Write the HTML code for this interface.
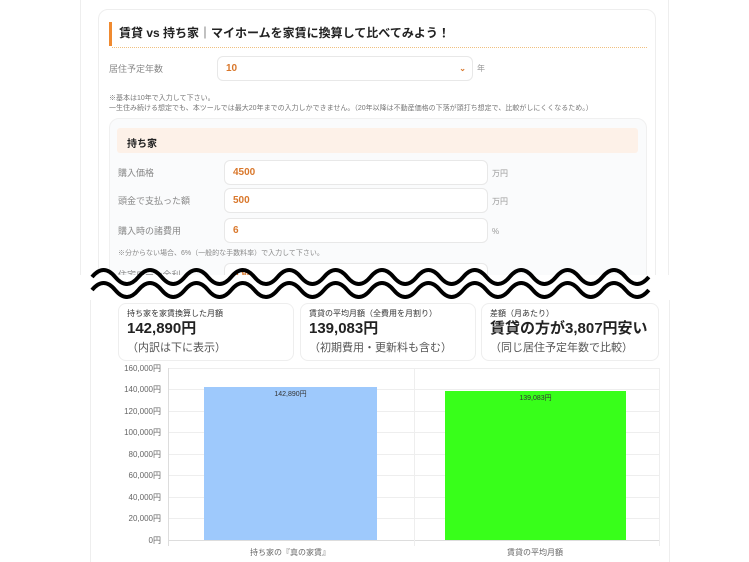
<!DOCTYPE html><html><head><meta charset="utf-8"><style>
*{margin:0;padding:0;box-sizing:border-box}
body{width:749px;height:562px;background:#fff;position:relative;overflow:hidden;font-family:"Liberation Sans","Noto Sans CJK JP",sans-serif;color:#333}
.a{position:absolute}
.lbl{font-size:9px;color:#888;line-height:10px}
.inp{position:absolute;background:#fff;border:1px solid #e8e8e8;border-radius:6px;color:#d9772b;font-size:10px;font-weight:bold;padding-left:8px;display:flex;align-items:center}
.unit{font-size:8px;color:#999;line-height:10px}
.card{position:absolute;border:1px solid #eee;border-radius:8px;background:#fff;top:303px;height:58px;padding:4px 8px}
.card .t{font-size:8px;color:#333}
.card .v{font-size:15px;font-weight:bold;color:#222;line-height:20px}
.card .s{font-size:11px;color:#555}
.yl{position:absolute;right:588px;font-size:8px;color:#666;text-align:right}
.gl{position:absolute;left:168px;width:491px;height:1px;background:#eee}
</style></head><body>
<div class="a" style="left:80px;top:0;width:1px;height:275px;background:#eee"></div>
<div class="a" style="left:668px;top:0;width:1px;height:275px;background:#eee"></div>
<div class="a" style="left:98px;top:9px;width:558px;height:290px;border:1px solid #eee;border-radius:10px;overflow:hidden">
 <div class="a" style="left:10px;top:12px;width:3px;height:24px;background:#f08a30"></div>
 <div class="a" style="left:20px;top:14px;font-size:12px;font-weight:bold;color:#222">賃貸 vs 持ち家｜マイホームを家賃に換算して比べてみよう！</div>
 <div class="a" style="left:13px;top:37px;width:535px;border-top:1px dotted #f0c080"></div>
 <div class="a lbl" style="left:10px;top:54px">居住予定年数</div>
 <div class="inp" style="left:118px;top:46px;width:256px;height:25px">10<span style="position:absolute;right:6px;font-size:8px">⌄</span></div>
 <div class="a unit" style="left:378px;top:54px">年</div>
 <div class="a" style="left:10px;top:84px;font-size:7px;color:#777;line-height:10px">※基本は10年で入力して下さい。<br>一生住み続ける想定でも、本ツールでは最大20年までの入力しかできません。（20年以降は不動産価格の下落が頭打ち想定で、比較がしにくくなるため。）</div>
 <div class="a" style="left:10px;top:108px;width:538px;height:200px;background:#fafbfc;border:1px solid #f0f0f0;border-radius:10px">
  <div class="a" style="left:7px;top:9px;width:521px;height:25px;background:#fdf1e8;border-radius:3px;font-size:10px;font-weight:bold;color:#222;padding:7px 10px">持ち家</div>
  <div class="a lbl" style="left:8px;top:49px">購入価格</div>
  <div class="inp" style="left:114px;top:41px;width:264px;height:25px">4500</div>
  <div class="a unit" style="left:382px;top:50px">万円</div>
  <div class="a lbl" style="left:8px;top:77px">頭金で支払った額</div>
  <div class="inp" style="left:114px;top:69px;width:264px;height:25px">500</div>
  <div class="a unit" style="left:382px;top:78px">万円</div>
  <div class="a lbl" style="left:8px;top:107px">購入時の諸費用</div>
  <div class="inp" style="left:114px;top:99px;width:264px;height:25px">6</div>
  <div class="a unit" style="left:382px;top:108px">%</div>
  <div class="a" style="left:8px;top:129px;font-size:7px;color:#888">※分からない場合、6%（一般的な手数料率）で入力して下さい。</div>
  <div class="a lbl" style="left:8px;top:151px">住宅ローン金利</div>
  <div class="inp" style="left:114px;top:144px;width:264px;height:25px">0.80</div>
 </div>
</div>
<div class="a" style="left:0;top:275px;width:749px;height:287px;background:#fff"></div>
<svg class="a" style="left:0;top:262px" width="749" height="45">
<path fill="none" stroke="#000" stroke-width="4" d="M92 15 q11.6 -14 23.2 0 t23.2 0 t23.2 0 t23.2 0 t23.2 0 t23.2 0 t23.2 0 t23.2 0 t23.2 0 t23.2 0 t23.2 0 t23.2 0 t23.2 0 t23.2 0 t23.2 0 t23.2 0 t23.2 0 t23.2 0 t23.2 0 t23.2 0 t23.2 0 t23.2 0 t23.2 0 t23.2 0"/>
<path fill="none" stroke="#000" stroke-width="4" d="M92 28 q11.6 -14 23.2 0 t23.2 0 t23.2 0 t23.2 0 t23.2 0 t23.2 0 t23.2 0 t23.2 0 t23.2 0 t23.2 0 t23.2 0 t23.2 0 t23.2 0 t23.2 0 t23.2 0 t23.2 0 t23.2 0 t23.2 0 t23.2 0 t23.2 0 t23.2 0 t23.2 0 t23.2 0 t23.2 0"/>
</svg>
<div class="a" style="left:90px;top:300px;width:1px;height:262px;background:#eee"></div>
<div class="a" style="left:669px;top:300px;width:1px;height:262px;background:#eee"></div>
<div class="card" style="left:118px;width:176px"><div class="t">持ち家を家賃換算した月額</div><div class="v">142,890円</div><div class="s">（内訳は下に表示）</div></div>
<div class="card" style="left:300px;width:176px"><div class="t">賃貸の平均月額（全費用を月割り）</div><div class="v">139,083円</div><div class="s">（初期費用・更新料も含む）</div></div>
<div class="card" style="left:481px;width:178px"><div class="t">差額（月あたり）</div><div class="v">賃貸の方が3,807円安い</div><div class="s">（同じ居住予定年数で比較）</div></div>
<div class="gl" style="top:368px"></div><div class="gl" style="top:389px"></div><div class="gl" style="top:411px"></div><div class="gl" style="top:432px"></div><div class="gl" style="top:454px"></div><div class="gl" style="top:475px"></div><div class="gl" style="top:497px"></div><div class="gl" style="top:518px"></div><div class="gl" style="top:540px;background:#ddd"></div>
<div class="a" style="left:168px;top:368px;width:1px;height:178px;background:#ddd"></div>
<div class="a" style="left:414px;top:368px;width:1px;height:178px;background:#eee"></div>
<div class="a" style="left:659px;top:368px;width:1px;height:178px;background:#eee"></div>
<div class="yl" style="top:363px">160,000円</div><div class="yl" style="top:384px">140,000円</div><div class="yl" style="top:406px">120,000円</div><div class="yl" style="top:427px">100,000円</div><div class="yl" style="top:449px">80,000円</div><div class="yl" style="top:470px">60,000円</div><div class="yl" style="top:492px">40,000円</div><div class="yl" style="top:513px">20,000円</div><div class="yl" style="top:535px">0円</div>
<div class="a" style="left:204px;top:387px;width:173px;height:153px;background:#9ec9fc;text-align:center;font-size:7px;padding-top:2px;color:#333">142,890円</div>
<div class="a" style="left:445px;top:391px;width:181px;height:149px;background:#38ff1a;text-align:center;font-size:7px;padding-top:2px;color:#333">139,083円</div>
<div class="a" style="left:240px;top:547px;width:100px;text-align:center;font-size:8px;color:#666">持ち家の『真の家賃』</div>
<div class="a" style="left:485px;top:547px;width:100px;text-align:center;font-size:8px;color:#666">賃貸の平均月額</div>
</body></html>
